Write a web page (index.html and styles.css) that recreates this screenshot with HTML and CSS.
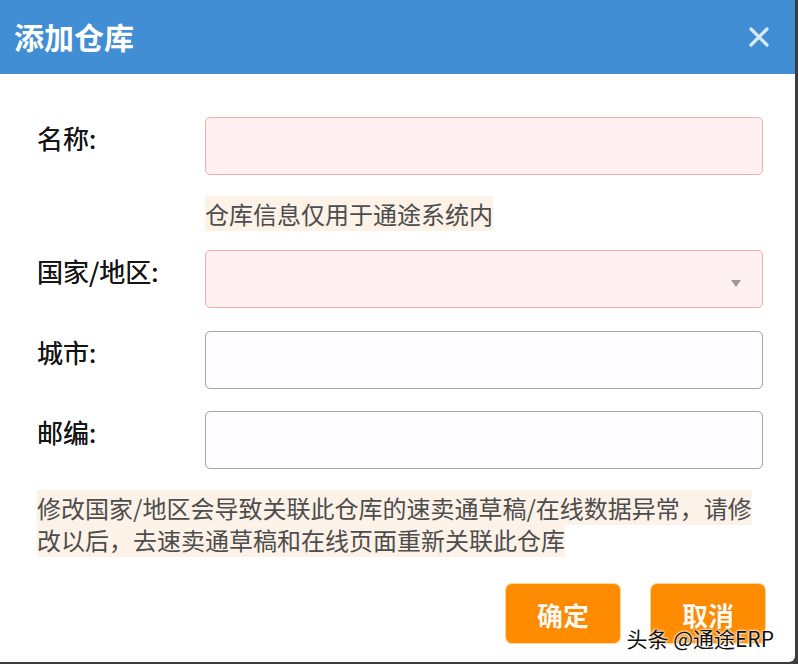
FILE: index.html
```html
<!DOCTYPE html>
<html lang="zh-CN">
<head>
<meta charset="utf-8">
<title>添加仓库</title>
<link rel="stylesheet" href="styles.css">
</head>
<body>
<div class="dialog">
  <div class="header">
    <span class="title">添加仓库</span>
    <svg class="close" width="22" height="22" viewBox="0 0 22 22"><path d="M3 3 L19 19 M19 3 L3 19" stroke="#d9e9f9" stroke-width="3.2" stroke-linecap="round" fill="none"/></svg>
  </div>
  <div class="body">
    <div class="row">
      <div class="label">名称:</div>
      <div class="field"><div class="input input-error"></div></div>
    </div>
    <div class="hint"><span class="hl">仓库信息仅用于通途系统内</span></div>
    <div class="row row-select">
      <div class="label">国家/地区:</div>
      <div class="field"><div class="input input-error select"><span class="caret"></span></div></div>
    </div>
    <div class="row row-gap">
      <div class="label">城市:</div>
      <div class="field"><div class="input"></div></div>
    </div>
    <div class="row row-gap2">
      <div class="label">邮编:</div>
      <div class="field"><div class="input"></div></div>
    </div>
    <p class="warn"><span class="hl">修改国家/地区会导致关联此仓库的速卖通草稿/在线数据异常，请修改以后，去速卖通草稿和在线页面重新关联此仓库</span></p>
    <div class="actions">
      <button class="btn">确定</button>
      <button class="btn">取消</button>
    </div>
  </div>
  <div class="watermark">头条 @通途ERP</div>
</div>
</body>
</html>
```
FILE: styles.css
```css
* { box-sizing: border-box; }
html, body { margin: 0; padding: 0; }
body {
  width: 798px;
  height: 664px;
  background: #3c3c3c;
  font-family: "Noto Sans CJK SC", "Noto Sans", sans-serif;
  overflow: hidden;
}
.dialog {
  position: relative;
  width: 795px;
  height: 662px;
  background: #ffffff;
  border-bottom-right-radius: 6px;
  overflow: hidden;
}
.header {
  height: 74px;
  background: #428ed5;
  display: flex;
  align-items: center;
  justify-content: space-between;
  padding: 0 25px 0 14px;
}
.title {
  color: #ffffff;
  font-size: 30px;
  font-weight: bold;
  line-height: 1;
  margin-top: -2px;
}
.close { display: block; }
.body {
  padding: 43px 32px 0 37px;
}
.row {
  display: flex;
  align-items: flex-start;
}
.label {
  width: 168px;
  flex: none;
  font-size: 26px;
  font-weight: normal;
  line-height: 30px;
  color: #151515;
  padding-top: 6px;
  text-shadow: 0 0 0.4px #151515;
}
.field { flex: 1; }
.input {
  height: 58px;
  border: 1px solid #a4a4ac;
  border-radius: 5px;
  background: #fdfdff;
}
.input-error {
  border-color: #f0adad;
  background: #fff1f1;
}
.select {
  display: flex;
  align-items: center;
  justify-content: flex-end;
  padding-right: 21px;
}
.caret {
  width: 0;
  height: 0;
  border-left: 5px solid transparent;
  border-right: 5px solid transparent;
  border-top: 7px solid #9a9aa0;
  margin-top: 8px;
}
.hint {
  margin: 25px 0 0 168px;
  font-size: 24px;
  line-height: 28px;
  color: #4d4d4d;
}
.hl { background: #fcf2e8; }
.row-select { margin-top: 22px; }
.row-gap { margin-top: 23px; }
.row-gap2 { margin-top: 22px; }
.warn {
  margin: 23px 0 0 0;
  width: 726px;
  font-size: 24px;
  line-height: 32px;
  color: #4d4d4d;
}
.actions {
  display: flex;
  justify-content: flex-end;
  gap: 31px;
  margin-top: 28px;
  margin-right: -2px;
}
.btn {
  width: 114px;
  height: 59px;
  border: none;
  border-radius: 6px;
  background: #ff8c00;
  box-shadow: 0 0 0 1px #ffd49a;
  color: #fff8ee;
  font-family: "Noto Sans CJK SC", sans-serif;
  font-size: 26px;
  font-weight: bold;
  padding: 2px 0 0 0;
  text-shadow: 0 0 1px rgba(120, 60, 0, 0.4);
}
.watermark {
  position: absolute;
  right: 21px;
  bottom: 12px;
  font-size: 21px;
  line-height: 24px;
  color: #111111;
  text-shadow: 0 0 2px #fff, 0 0 2px #fff, 0 0 3px #fff;
  font-family: "Noto Sans CJK SC", sans-serif;
}
```
